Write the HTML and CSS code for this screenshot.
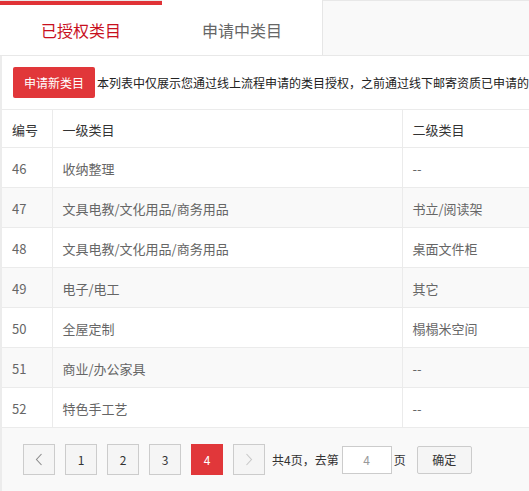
FILE: index.html
```html
<!DOCTYPE html>
<html lang="zh-CN">
<head>
<meta charset="utf-8">
<title>类目管理</title>
<link rel="stylesheet" href="styles.css">
</head>
<body>
<div class="page">
  <div class="tabs">
    <div class="tab active">已授权类目</div>
    <div class="tab">申请中类目</div>
  </div>
  <div class="content">
    <div class="toolbar">
      <button class="btn-apply">申请新类目</button>
      <span class="desc">本列表中仅展示您通过线上流程申请的类目授权，之前通过线下邮寄资质已申请的</span>
    </div>
    <table class="grid">
      <colgroup>
        <col class="c1"><col class="c2"><col class="c3">
      </colgroup>
      <thead>
        <tr><th>编号</th><th>一级类目</th><th>二级类目</th></tr>
      </thead>
      <tbody>
        <tr><td>46</td><td>收纳整理</td><td>--</td></tr>
        <tr><td>47</td><td>文具电教/文化用品/商务用品</td><td>书立/阅读架</td></tr>
        <tr><td>48</td><td>文具电教/文化用品/商务用品</td><td>桌面文件柜</td></tr>
        <tr><td>49</td><td>电子/电工</td><td>其它</td></tr>
        <tr><td>50</td><td>全屋定制</td><td>榻榻米空间</td></tr>
        <tr><td>51</td><td>商业/办公家具</td><td>--</td></tr>
        <tr><td>52</td><td>特色手工艺</td><td>--</td></tr>
      </tbody>
    </table>
    <div class="pager">
      <span class="pg prev"><svg width="8" height="13" viewBox="0 0 8 13"><path d="M6.5 1 L1.5 6.5 L6.5 12" fill="none" stroke="#8c8c8c" stroke-width="1.1"/></svg></span>
      <span class="pg">1</span>
      <span class="pg">2</span>
      <span class="pg">3</span>
      <span class="pg current">4</span>
      <span class="pg next"><svg width="8" height="13" viewBox="0 0 8 13"><path d="M1.5 1 L6.5 6.5 L1.5 12" fill="none" stroke="#c8c8c8" stroke-width="1.1"/></svg></span>
      <span class="total">共4页，去第</span>
      <input class="jump" type="text" value="4">
      <span class="unit">页</span>
      <button class="btn-ok">确定</button>
    </div>
  </div>
</div>
</body>
</html>
```
FILE: styles.css
```css
* { box-sizing: border-box; }
html, body { margin: 0; padding: 0; background: #fff; }
body {
  font-family: "Noto Sans CJK SC", "Liberation Sans", sans-serif;
  font-size: 12px;
  color: #333;
  overflow: hidden;
}
.page { padding-top: 1px; width: 529px; overflow: hidden; }

.tabs {
  display: flex;
  height: 56px;
  background: #f9f9f9;
  border-top: 1px solid #e8e8e8;
  border-bottom: 1px solid #e8e8e8;
  margin-top: -1px;
}
.tab {
  width: 161px;
  background: #fff;
  border-right: 1px solid #e6e6e6;
  display: flex;
  align-items: center;
  justify-content: center;
  font-size: 16px;
  color: #666;
  padding-top: 4px;
  margin-top: -1px;
}
.tab.active {
  width: 162px;
  border-top: 4px solid #e03236;
  border-right: none;
  color: #c8101e;
  padding-top: 0;
  margin-top: 0;
}

.content {
  border-left: 2px solid #ececec;
  background: #fff;
}
.toolbar {
  display: flex;
  align-items: center;
  padding: 11px 0 11px 11px;
  white-space: nowrap;
  overflow: hidden;
}
.btn-apply {
  flex: none;
  height: 31px;
  padding: 0 11px;
  border: none;
  border-radius: 2px;
  background: #e1373a;
  color: #fff;
  font-family: inherit;
  font-size: 12px;
  line-height: 31px;
}
.desc {
  margin-left: 2px;
  font-size: 12px;
  color: #222;
}

.grid {
  width: 720px;
  border-collapse: collapse;
  table-layout: fixed;
  border-top: 1px solid #ebebeb;
}
.grid col.c1 { width: 50px; }
.grid col.c2 { width: 350px; }
.grid th, .grid td {
  text-align: left;
  padding: 0 10px;
  border-bottom: 1px solid #ebebeb;
  border-right: 1px solid #ebebeb;
  font-size: 13px;
  white-space: nowrap;
}
.grid th {
  height: 38px;
  font-weight: normal;
  color: #333;
  padding-top: 2px;
}
.grid td {
  height: 40px;
  color: #666;
  padding-top: 2px;
}
.grid tbody tr:nth-child(even) td { background: #f9f9f9; }

.pager {
  display: flex;
  align-items: center;
  height: 63px;
  background: #f9f9f9;
  padding: 0 0 0 21px;
  font-size: 12px;
  color: #333;
}
.pg {
  width: 32px;
  height: 31px;
  margin-right: 10px;
  border: 1px solid #cccccc;
  background: #f5f5f5;
  display: flex;
  align-items: center;
  justify-content: center;
  color: #333;
}
.pg.current {
  background: #e1373a;
  border-color: #e1373a;
  color: #fff;
}
.pg.next { margin-right: 7px; }
.total { margin-right: 3px; }
.jump {
  width: 50px;
  height: 28px;
  border: 1px solid #cccccc;
  background: #fff;
  text-align: center;
  font-family: inherit;
  font-size: 12px;
  color: #999;
  padding: 0;
}
.unit { margin-left: 2px; margin-right: 11px; }
.btn-ok {
  width: 55px;
  height: 28px;
  border: 1px solid #cccccc;
  border-radius: 2px;
  background: #f5f5f5;
  font-family: inherit;
  font-size: 12px;
  color: #333;
  padding: 0;
}
```
